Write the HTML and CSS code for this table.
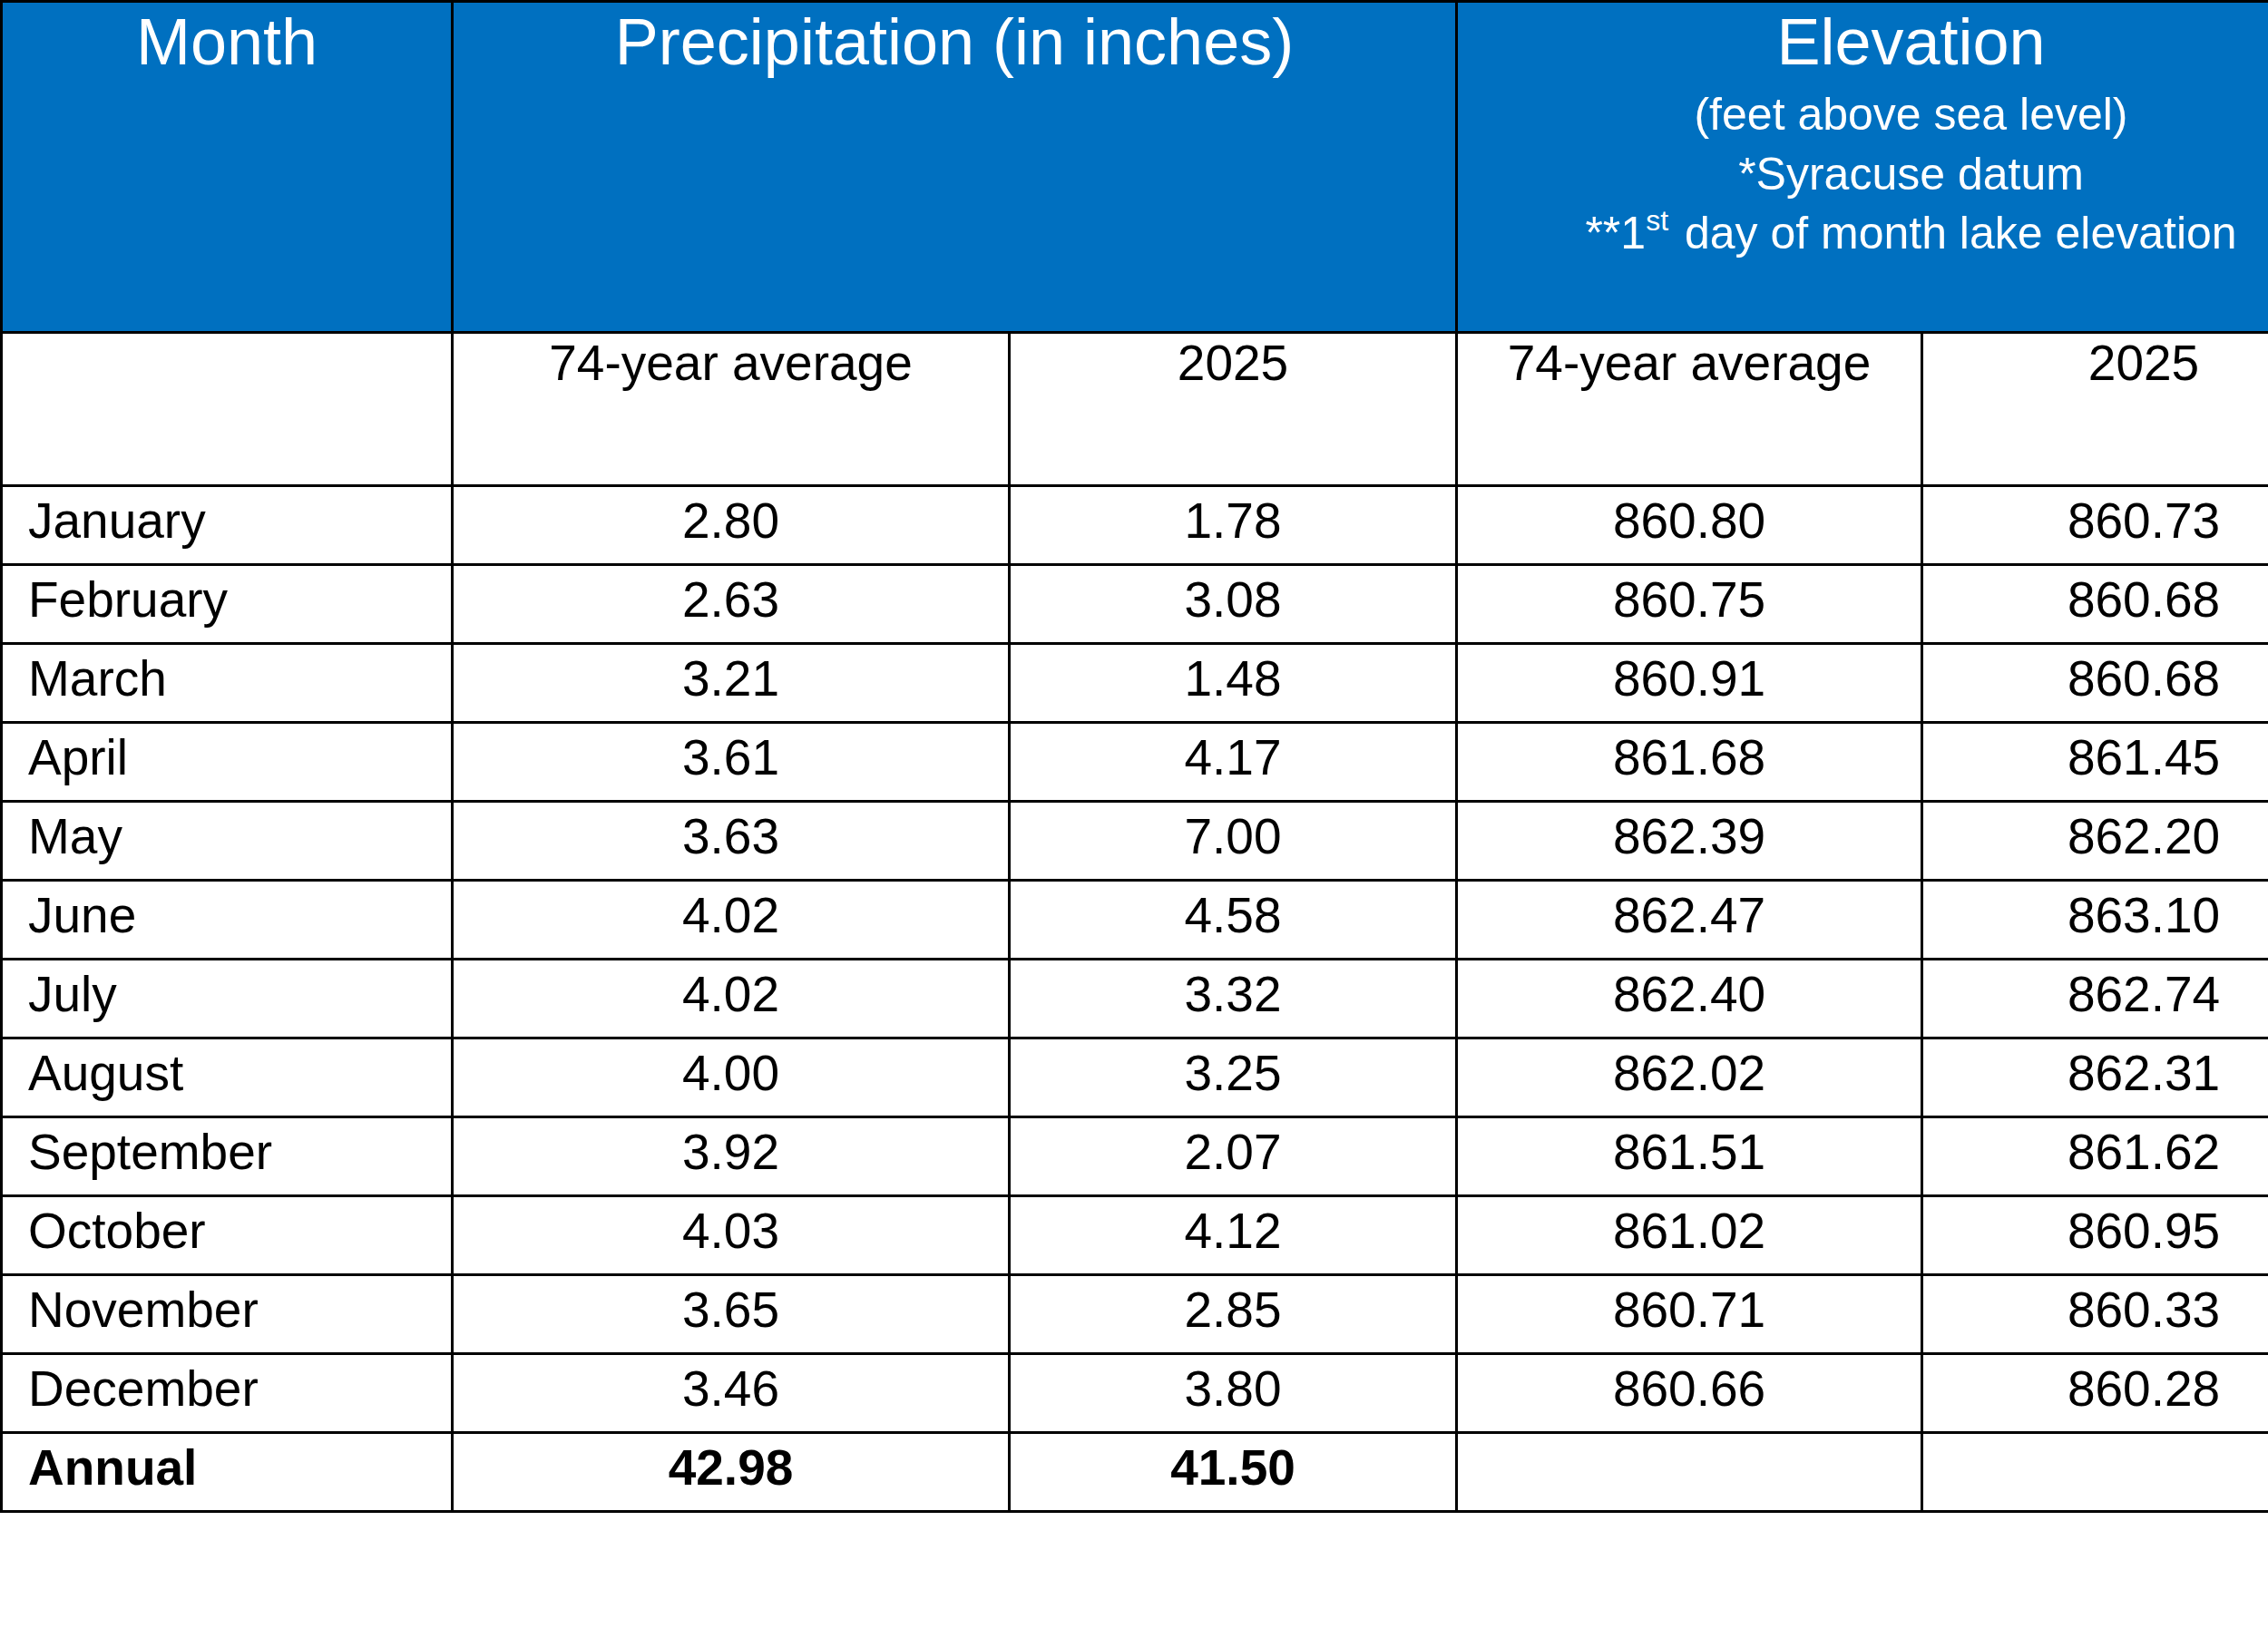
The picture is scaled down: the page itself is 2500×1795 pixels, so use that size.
FILE: index.html
```html
<!DOCTYPE html>
<html lang="en">
<head>
<meta charset="utf-8">
<title>Precipitation and Elevation</title>
<link rel="stylesheet" href="styles.css">
</head>
<body>
<table class="data">
  <colgroup>
    <col class="c-month">
    <col class="c-pavg">
    <col class="c-p25">
    <col class="c-eavg">
    <col class="c-e25">
  </colgroup>
  <thead>
    <tr class="head">
      <th class="h-cell">Month</th>
      <th class="h-cell" colspan="2">Precipitation (in inches)</th>
      <th class="h-cell" colspan="2">
        <div class="h-title">Elevation</div>
        <div class="h-sub">(feet above sea level)</div>
        <div class="h-sub">*Syracuse datum</div>
        <div class="h-sub">**1<sup class="ord">st</sup> day of month lake elevation</div>
      </th>
    </tr>
    <tr class="sub">
      <th class="s-cell"></th>
      <th class="s-cell">74-year average</th>
      <th class="s-cell">2025</th>
      <th class="s-cell">74-year average</th>
      <th class="s-cell">2025</th>
    </tr>
  </thead>
  <tbody>
    <tr class="row"><td class="m">January</td><td>2.80</td><td>1.78</td><td>860.80</td><td>860.73</td></tr>
    <tr class="row"><td class="m">February</td><td>2.63</td><td>3.08</td><td>860.75</td><td>860.68</td></tr>
    <tr class="row"><td class="m">March</td><td>3.21</td><td>1.48</td><td>860.91</td><td>860.68</td></tr>
    <tr class="row"><td class="m">April</td><td>3.61</td><td>4.17</td><td>861.68</td><td>861.45</td></tr>
    <tr class="row"><td class="m">May</td><td>3.63</td><td>7.00</td><td>862.39</td><td>862.20</td></tr>
    <tr class="row"><td class="m">June</td><td>4.02</td><td>4.58</td><td>862.47</td><td>863.10</td></tr>
    <tr class="row"><td class="m">July</td><td>4.02</td><td>3.32</td><td>862.40</td><td>862.74</td></tr>
    <tr class="row"><td class="m">August</td><td>4.00</td><td>3.25</td><td>862.02</td><td>862.31</td></tr>
    <tr class="row"><td class="m">September</td><td>3.92</td><td>2.07</td><td>861.51</td><td>861.62</td></tr>
    <tr class="row"><td class="m">October</td><td>4.03</td><td>4.12</td><td>861.02</td><td>860.95</td></tr>
    <tr class="row"><td class="m">November</td><td>3.65</td><td>2.85</td><td>860.71</td><td>860.33</td></tr>
    <tr class="row"><td class="m">December</td><td>3.46</td><td>3.80</td><td>860.66</td><td>860.28</td></tr>
    <tr class="row total"><td class="m">Annual</td><td>42.98</td><td>41.50</td><td></td><td></td></tr>
  </tbody>
</table>
</body>
</html>
```

FILE: styles.css
```css
html, body {
  margin: 0;
  padding: 0;
  background: #ffffff;
  overflow: hidden;
}

body {
  width: 2500px;
  height: 1795px;
  font-family: "Liberation Sans", Arial, sans-serif;
  color: #000000;
}

.data {
  border-collapse: collapse;
  table-layout: fixed;
  width: 2606px;
  margin: 0;
}

.c-month { width: 497px; }
.c-pavg { width: 614px; }
.c-p25 { width: 493px; }
.c-eavg { width: 513px; }
.c-e25 { width: 489px; }

.data th,
.data td {
  border: 3px solid #000000;
  vertical-align: top;
  text-align: center;
  padding: 0;
}

.head { height: 365px; }

.h-cell {
  background: #0070c0;
  color: #ffffff;
  font-weight: normal;
  font-size: 72px;
  line-height: 86px;
  padding-top: 5px;
}

.h-title {
  font-size: 72px;
  line-height: 86px;
  margin-bottom: 5px;
}

.h-sub {
  font-size: 50px;
  line-height: 65.5px;
  white-space: nowrap;
}

.ord {
  font-size: 32px;
  line-height: 0;
  vertical-align: 20px;
  margin-right: 4px;
}

.sub { height: 169px; }

.s-cell {
  font-weight: normal;
  font-size: 55px;
  line-height: 64px;
  padding-top: 5px;
}

.row { height: 87px; }

.row td {
  font-size: 55px;
  line-height: 64px;
  padding-top: 5px;
}

.row td.m {
  text-align: left;
  padding-left: 28px;
}

.total td {
  font-weight: bold;
}
```
